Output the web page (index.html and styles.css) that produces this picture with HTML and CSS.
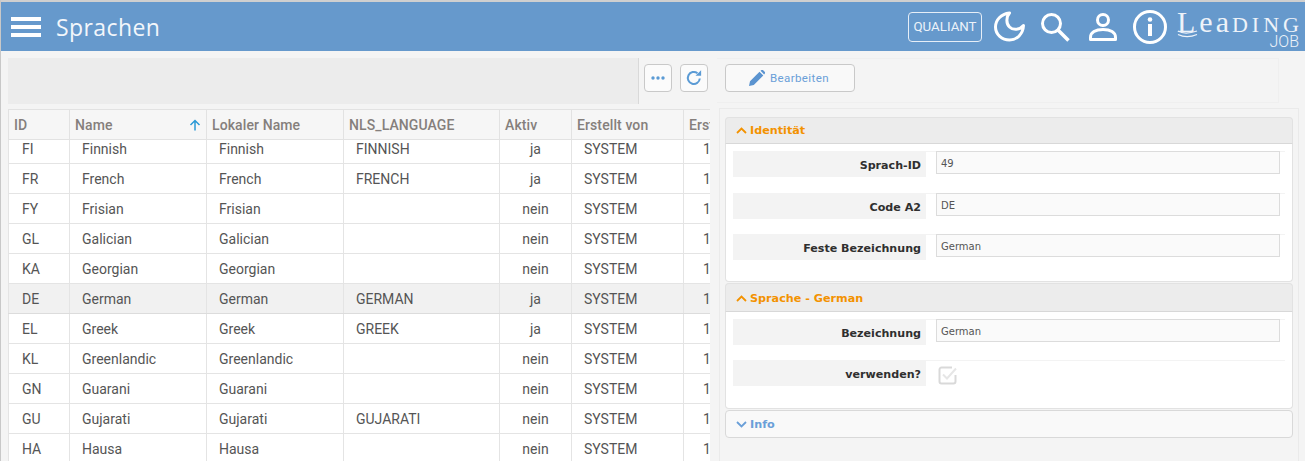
FILE: index.html
```html
<!DOCTYPE html>
<html lang="de">
<head>
    <meta charset="UTF-8">
    <title>Sprachen</title>
    <link rel="stylesheet" href="styles.css">
</head>
<body>

<div class="topbar">
    <svg class="menu-icon" width="30" height="20" viewBox="0 0 30 20"><path d="M0 0h30v4H0zM0 8h30v4H0zM0 16h30v4H0z" fill="#fff"/></svg>
    <span class="page-title">Sprachen</span>
    <div class="topbar-right">
        <span class="tenant">QUALIANT</span>
        <svg class="top-icon moon" width="32" height="32" viewBox="0 0 32 32"><path d="M15.500 2C7 3 1.500 9 1.500 16c0 7.500 6.500 13 14 13s13.500-6 14-14.500c-3.500 4.500-10.500 5-14 1.500s-3.500-10 0-14z" fill="none" stroke="#fff" stroke-width="3" stroke-linejoin="round"/></svg>
        <svg class="top-icon search" width="32" height="32" viewBox="0 0 32 32"><circle cx="12.500" cy="12.500" r="9" fill="none" stroke="#fff" stroke-width="3"/><path d="M19 19l10.500 10.500" stroke="#fff" stroke-width="3.500"/></svg>
        <svg class="top-icon user" width="30" height="30" viewBox="0 0 30 30"><circle cx="15" cy="8" r="5.500" fill="none" stroke="#fff" stroke-width="3"/><path d="M2.500 27.500v-2c0-5 5-8 12.500-8s12.500 3 12.500 8v2z" fill="none" stroke="#fff" stroke-width="3" stroke-linejoin="round"/></svg>
        <svg class="top-icon info" width="36" height="36" viewBox="0 0 36 36"><circle cx="18" cy="18" r="15.500" fill="none" stroke="#fff" stroke-width="3"/><circle cx="18" cy="10.500" r="2.300" fill="#fff"/><path d="M16 15h4v12h-4z" fill="#fff"/></svg>
        <div class="logo">
            <span class="logo-name"><span class="logo-l">L</span><span class="logo-ea">ea</span>DING</span>
            <svg class="logo-waves" width="22" height="8" viewBox="0 0 22 8"><path d="M1 1c5 3 10 3 19 0M1 4.500c6 3 12 3 19 0" fill="none" stroke="#eef3f9" stroke-width="1.200"/></svg>
            <span class="logo-job">JOB</span>
        </div>
    </div>
</div>

<div class="main">
    <div class="list-pane">
        <div class="list-toolbar">
            <div class="list-toolbar-fill"></div>
            <div class="list-toolbar-buttons">
                <button class="icon-btn"><svg width="14" height="4" viewBox="0 0 14 4"><circle cx="2" cy="2" r="1.700"/><circle cx="7" cy="2" r="1.700"/><circle cx="12" cy="2" r="1.700"/></svg></button>
                <button class="icon-btn"><svg width="16" height="16" viewBox="0 0 16 16"><path d="M13.800 8.500A6 6 0 1 1 11.500 3.200" fill="none" stroke="#5b9bd5" stroke-width="2"/><path d="M9.500 5.800h5.600V.2z" fill="#5b9bd5"/></svg></button>
            </div>
        </div>
        <div class="grid">
            <table class="grid-head">
                <colgroup><col class="c-id"><col class="c-name"><col class="c-local"><col class="c-nls"><col class="c-active"><col class="c-user"><col class="c-date"></colgroup>
                <tr>
                    <th>ID</th>
                    <th><div class="sort-cell">Name<svg width="12" height="12" viewBox="0 0 12 12"><path d="M6 11.500V1.500M1.500 6L6 1.500 10.500 6" fill="none" stroke="#2b9ad6" stroke-width="1.500"/></svg></div></th>
                    <th>Lokaler Name</th>
                    <th>NLS_LANGUAGE</th>
                    <th>Aktiv</th>
                    <th>Erstellt von</th>
                    <th>Erstellt am</th>
                </tr>
            </table>
            <div class="grid-body">
                <table>
                    <colgroup><col class="c-id"><col class="c-name"><col class="c-local"><col class="c-nls"><col class="c-active"><col class="c-user"><col class="c-date"></colgroup>
                    <tr><td>FI</td><td>Finnish</td><td>Finnish</td><td>FINNISH</td><td class="center">ja</td><td>SYSTEM</td><td>1</td></tr>
                    <tr><td>FR</td><td>French</td><td>French</td><td>FRENCH</td><td class="center">ja</td><td>SYSTEM</td><td>1</td></tr>
                    <tr><td>FY</td><td>Frisian</td><td>Frisian</td><td></td><td class="center">nein</td><td>SYSTEM</td><td>1</td></tr>
                    <tr><td>GL</td><td>Galician</td><td>Galician</td><td></td><td class="center">nein</td><td>SYSTEM</td><td>1</td></tr>
                    <tr><td>KA</td><td>Georgian</td><td>Georgian</td><td></td><td class="center">nein</td><td>SYSTEM</td><td>1</td></tr>
                    <tr class="selected"><td>DE</td><td>German</td><td>German</td><td>GERMAN</td><td class="center">ja</td><td>SYSTEM</td><td>1</td></tr>
                    <tr><td>EL</td><td>Greek</td><td>Greek</td><td>GREEK</td><td class="center">ja</td><td>SYSTEM</td><td>1</td></tr>
                    <tr><td>KL</td><td>Greenlandic</td><td>Greenlandic</td><td></td><td class="center">nein</td><td>SYSTEM</td><td>1</td></tr>
                    <tr><td>GN</td><td>Guarani</td><td>Guarani</td><td></td><td class="center">nein</td><td>SYSTEM</td><td>1</td></tr>
                    <tr><td>GU</td><td>Gujarati</td><td>Gujarati</td><td>GUJARATI</td><td class="center">nein</td><td>SYSTEM</td><td>1</td></tr>
                    <tr><td>HA</td><td>Hausa</td><td>Hausa</td><td></td><td class="center">nein</td><td>SYSTEM</td><td>1</td></tr>
                </table>
            </div>
        </div>
    </div>

    <div class="detail-pane">
        <div class="detail-toolbar">
            <button class="edit-btn"><svg width="16" height="16" viewBox="0 0 16 16"><path d="M0 16l1-4.800L10.500 1.700l3.800 3.800L4.800 15zM11.500.8l1-.8c.5-.3 1-.3 1.400 0l2 2c.3.400.3 1 0 1.400l-.8 1z" fill="#5b94d0"/></svg>Bearbeiten</button>
        </div>
        <div class="form-panel">
            <div class="section">
                <div class="section-head open"><svg width="11" height="7" viewBox="0 0 11 7"><path d="M1 6l4.500-4.500L10 6" fill="none" stroke="#f39200" stroke-width="1.800"/></svg>Identität</div>
                <div class="section-body first">
                    <div class="field"><label>Sprach-ID</label><div class="value">49</div></div>
                    <div class="field"><label>Code A2</label><div class="value">DE</div></div>
                    <div class="field"><label>Feste Bezeichnung</label><div class="value">German</div></div>
                </div>
            </div>
            <div class="section">
                <div class="section-head open"><svg width="11" height="7" viewBox="0 0 11 7"><path d="M1 6l4.500-4.500L10 6" fill="none" stroke="#f39200" stroke-width="1.800"/></svg>Sprache - German</div>
                <div class="section-body second">
                    <div class="field"><label>Bezeichnung</label><div class="value">German</div></div>
                    <div class="field"><label>verwenden?</label>
                        <div class="check"><svg width="20" height="20" viewBox="0 0 20 20"><path d="M14 2.500H3.500a2 2 0 0 0-2 2v12a2 2 0 0 0 2 2h12a2 2 0 0 0 2-2V10" fill="none" stroke="#d9d9d9" stroke-width="2"/><path d="M5 9.500l4 4L18 3.500" fill="none" stroke="#e6e6e6" stroke-width="2"/></svg></div>
                    </div>
                </div>
            </div>
            <div class="section closed">
                <div class="section-head"><svg width="11" height="7" viewBox="0 0 11 7"><path d="M1 1l4.500 4.500L10 1" fill="none" stroke="#6a9fd8" stroke-width="1.800"/></svg>Info</div>
            </div>
        </div>
    </div>
</div>

</body>
</html>
```

FILE: styles.css
```css
html, body { margin: 0; padding: 0; height: 461px; overflow: hidden; }
body { background-color: #f4f4f4; font-family: Roboto, sans-serif; color: #555; border-left: 1px solid #c8c8c8; }

/* top bar */
.topbar { display: flex; align-items: center; height: 49px; margin-top: 2px; background-color: #6699cc; color: #fff; box-shadow: 0 -2px 0 #cfcfcf; }
.menu-icon { margin-left: 10px; }
.page-title { margin-left: 15px; font-family: "Open Sans", sans-serif; font-size: 23px; letter-spacing: 0.4px; color: #f2f6fb; }
.topbar-right { display: flex; align-items: center; margin-left: auto; height: 100%; }
.tenant { box-sizing: border-box; width: 74px; height: 30px; line-height: 28px; text-align: center; border: 1px solid #e6eef7; border-radius: 4px; font-size: 13.300px; color: #edf3fa; }
.top-icon { display: block; flex: none; }
.moon { margin-left: 12px; }
.search { margin-left: 13px; }
.user { margin-left: 17px; }
.info { margin-left: 14px; }
.logo { position: relative; width: 128px; height: 49px; margin-left: 9px; color: #eef3f9; }
.logo-name { position: absolute; top: 9px; left: 0; font-family: "Liberation Serif", serif; font-size: 22px; line-height: 22px; letter-spacing: 4px; white-space: nowrap; }
.logo-l { font-size: 30px; }
.logo-ea { font-size: 30px; letter-spacing: 3px; }
.logo-waves { position: absolute; top: 28px; left: 0; }
.logo-job { position: absolute; top: 34px; right: 6px; font-size: 16px; line-height: 12px; font-weight: 300; }

.main { display: flex; height: 410px; }

/* left side */
.list-pane { width: 702px; margin-left: 7px; flex: none; overflow: hidden; }
.list-toolbar { display: flex; height: 46px; margin-top: 7px; }
.list-toolbar-fill { flex-grow: 1; background-color: #ececec; }
.list-toolbar-buttons { display: flex; gap: 8px; width: 72px; box-sizing: border-box; padding: 6px 0 0 5px; border-left: 1px solid #d9d9d9; }
.icon-btn { box-sizing: border-box; display: flex; align-items: center; justify-content: center; width: 28px; height: 28px; padding: 0; background-color: #fbfbfb; border: 1px solid #c9c9c9; border-radius: 4px; }
.icon-btn svg { fill: #5b9bd5; }

.grid { margin-top: 5px; background-color: #fff; }
table { border-collapse: collapse; table-layout: fixed; width: 780px; }
.c-id { width: 61px; }
.c-name { width: 137px; }
.c-local { width: 137px; }
.c-nls { width: 156px; }
.c-active { width: 72px; }
.c-user { width: 112px; }
.c-date { width: 105px; }
th { height: 29px; padding: 0 0 0 5px; text-align: left; font-size: 14px; font-weight: 500; letter-spacing: 0.1px; color: #857f7c; background-color: #f6f6f6; border: 1px solid #e2e2e2; border-left: 0; white-space: nowrap; overflow: hidden; }
th:first-child { border-left: 1px solid #e2e2e2; }
.sort-cell { display: flex; align-items: center; justify-content: space-between; padding-right: 5px; }
.grid-body { height: 322px; overflow: hidden; }
.grid-body table { margin-top: -6px; }
td { height: 29px; padding: 0 0 0 12px; font-size: 14px; color: #555; border-right: 1px solid #e4e4e4; border-bottom: 1px solid #e4e4e4; white-space: nowrap; }
td:first-child { border-left: 1px solid #e4e4e4; padding-left: 13px; }
td:last-child { padding-left: 19px; }
td.center { padding: 0; text-align: center; }
.selected td { background-color: #f1f1f1; border-bottom-color: #dcdcdc; }

/* right side */
.detail-pane { flex-grow: 1; margin-left: 7px; }
.detail-toolbar { box-sizing: border-box; width: 562px; height: 45px; margin-top: 7px; padding: 5px 0 0 8px; border: 1px solid #efefef; border-left: 0; }
.edit-btn { box-sizing: border-box; display: flex; align-items: center; gap: 5px; width: 130px; height: 28px; padding: 0 0 0 23px; font-family: Roboto, sans-serif; font-size: 11.500px; letter-spacing: 0.4px; color: #6a9fd8; background-color: #f9f9f9; border: 1px solid #c9c9c9; border-radius: 4px; }
.form-panel { box-sizing: border-box; width: 580px; height: 355px; margin-top: 5px; margin-left: 2px; padding: 8px 5px 0; border-left: 1px solid #eaeaea; border-top: 1px solid #eaeaea; border-right: 1px solid #eaeaea; }

.section-head { box-sizing: border-box; display: flex; align-items: center; gap: 3px; padding-left: 10px; font-family: "DejaVu Sans", sans-serif; font-size: 11.200px; font-weight: bold; }
.section-head.open { height: 27px; color: #f39200; background-color: #ececec; border: 1px solid #e2e2e2; border-bottom: 1px solid #d8d8d8; border-radius: 4px 4px 0 0; }
.section + .section { margin-top: 1px; }
.section:nth-child(2) .section-head { height: 29px; padding-top: 1px; }
.section-body { box-sizing: border-box; padding: 7px 12px 0 7px; background-color: #fff; border: 1px solid #e2e2e2; border-top: 0; border-radius: 0 0 4px 4px; }
.section-body.first { height: 138px; }
.section-body.second { height: 97px; }
.closed .section-head { height: 28px; color: #6a9fd8; background-color: #f9f9f9; border: 1px solid #d9d9d9; border-radius: 4px; }

.field { display: flex; height: 26px; margin-right: -5px; margin-bottom: 15px; box-shadow: inset 0 1px 0 #f3f3f3; }
.first .field:first-child { margin-bottom: 16px; }
.field label { box-sizing: border-box; width: 193px; line-height: 29px; padding-right: 5px; text-align: right; font-family: "DejaVu Sans", sans-serif; font-size: 11.100px; font-weight: bold; color: #2f2f2f; background-color: #f3f3f3; }
.value { box-sizing: border-box; flex-grow: 1; height: 23px; margin-left: 10px; margin-right: 5px; padding-left: 4px; line-height: 24px; font-family: "DejaVu Sans", sans-serif; font-size: 10px; color: #555; background-color: #fafafa; border: 1px solid #dcdcdc; }
.check { margin-left: 12px; padding-top: 5px; }
```
